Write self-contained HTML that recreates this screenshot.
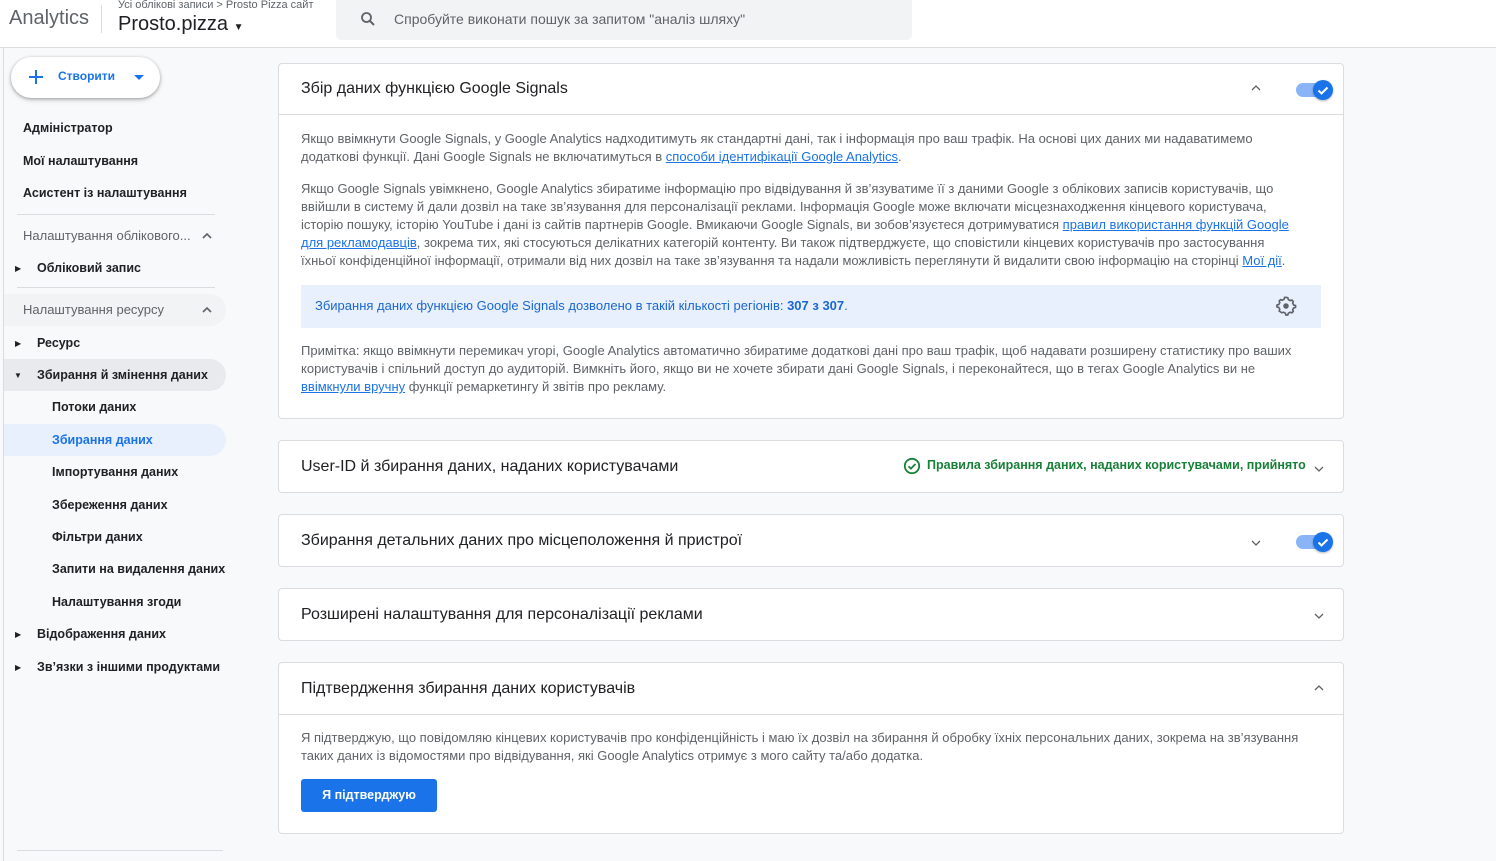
<!DOCTYPE html>
<html><head><meta charset="utf-8"><style>
*{box-sizing:border-box;margin:0;padding:0}
body{width:1496px;height:861px;overflow:hidden;background:#f8f9fa;font-family:"Liberation Sans",Arial,sans-serif;color:#202124;position:relative}
.hdr{position:absolute;left:0;top:0;width:1496px;height:48px;background:#fff;border-bottom:1px solid #dadce0}
.logo{position:absolute;left:9px;top:7px;font-size:20px;color:#5f6368}
.vsep{position:absolute;left:101px;top:5px;width:1px;height:28px;background:#dadce0}
.crumb{position:absolute;left:118px;top:-1px;font-size:11px;color:#5f6368}
.prop{position:absolute;left:118px;top:13px;font-size:20px;color:#202124}
.search{position:absolute;left:336px;top:0;width:576px;height:40px;background:#f1f3f4;border-radius:0 0 6px 6px}
.search span{position:absolute;left:58px;top:11px;font-size:14px;color:#5f6368}
.side{position:absolute;left:3px;top:48px;width:1px;height:813px;background:#dadce0}
.create{position:absolute;left:11px;top:57px;width:149px;height:41px;background:#fff;border-radius:21px;box-shadow:0 1px 3px rgba(0,0,0,.3),0 2px 6px rgba(0,0,0,.12)}
.create span{position:absolute;left:47px;top:12px;font-size:12px;color:#1a73e8;font-weight:bold}
.ni{position:absolute;font-size:12.5px;color:#202124;font-weight:bold;white-space:nowrap}
.gh{color:#5f6368;font-weight:normal;font-size:13px}
.pill{position:absolute;left:4px;width:222px;height:32px;border-radius:0 16px 16px 0}
.tri{position:absolute;font-size:8px;color:#202124}
.hl{position:absolute;left:17px;width:198px;height:1px;background:#dadce0}
.card{position:absolute;left:278px;width:1066px;background:#fff;border:1px solid #dadce0;border-radius:4px}
.ct{position:absolute;left:22px;font-size:16px;color:#202124}
.p{position:absolute;left:22px;width:1000px;font-size:13px;line-height:18px;color:#5f6368}
a{color:#1a73e8;text-decoration:underline}
.tog{position:absolute;width:34px;height:14px;border-radius:7px;background:#8ab4f8}
.tog i{position:absolute;right:-3px;top:-3px;width:20px;height:20px;border-radius:50%;background:#1a73e8;box-shadow:0 1px 2px rgba(0,0,0,.3)}
.cv{position:absolute}
</style></head><body>
<div class="hdr">
<div class="logo">Analytics</div><div class="vsep"></div>
<div class="crumb">Усі облікові записи &gt; Prosto Pizza сайт</div>
<div class="prop">Prosto.pizza <span style="font-size:10px">▼</span></div>
<div class="search"><svg style="position:absolute;left:23px;top:10px" width="18" height="18" viewBox="0 0 24 24"><circle cx="10" cy="10" r="6" fill="none" stroke="#5f6368" stroke-width="2.4"/><path d="M14.5 14.5L20 20" stroke="#5f6368" stroke-width="2.6"/></svg><span>Спробуйте виконати пошук за запитом "аналіз шляху"</span></div>
</div>
<div class="side"></div>
<div class="create"><svg style="position:absolute;left:17px;top:12px" width="16" height="16"><path d="M8 1v14M1 8h14" stroke="#1a73e8" stroke-width="2"/></svg><span>Створити</span><svg style="position:absolute;left:123px;top:18px" width="10" height="6"><path d="M0 0h10L5 5z" fill="#1a73e8"/></svg></div>
<div class="ni" style="left:23px;top:121px">Адміністратор</div>
<div class="ni" style="left:23px;top:154px">Мої налаштування</div>
<div class="ni" style="left:23px;top:186px">Асистент із налаштування</div>
<div class="hl" style="top:214px"></div>
<div class="ni gh" style="left:23px;top:228px">Налаштування облікового...</div>
<svg class="cv" style="left:202px;top:232px" width="10" height="7"><path d="M1 6l4-4 4 4" fill="none" stroke="#5f6368" stroke-width="1.6"/></svg>
<div class="tri" style="left:15px;top:264px">▶</div>
<div class="ni" style="left:37px;top:261px">Обліковий запис</div>
<div class="hl" style="top:287px"></div>
<div class="pill" style="top:294px;background:#f1f3f4"></div>
<div class="ni gh" style="left:23px;top:302px">Налаштування ресурсу</div>
<svg class="cv" style="left:202px;top:306px" width="10" height="7"><path d="M1 6l4-4 4 4" fill="none" stroke="#5f6368" stroke-width="1.6"/></svg>
<div class="tri" style="left:15px;top:339px">▶</div>
<div class="ni" style="left:37px;top:336px">Ресурс</div>
<div class="pill" style="top:359px;background:#e8eaed"></div>
<div class="tri" style="left:14px;top:371px">▼</div>
<div class="ni" style="left:37px;top:368px">Збирання й змінення даних</div>
<div class="ni" style="left:52px;top:400px">Потоки даних</div>
<div class="pill" style="top:424px;background:#e8f0fe"></div>
<div class="ni" style="left:52px;top:433px;color:#1a73e8">Збирання даних</div>
<div class="ni" style="left:52px;top:465px">Імпортування даних</div>
<div class="ni" style="left:52px;top:498px">Збереження даних</div>
<div class="ni" style="left:52px;top:530px">Фільтри даних</div>
<div class="ni" style="left:52px;top:562px">Запити на видалення даних</div>
<div class="ni" style="left:52px;top:595px">Налаштування згоди</div>
<div class="tri" style="left:15px;top:630px">▶</div>
<div class="ni" style="left:37px;top:627px">Відображення даних</div>
<div class="tri" style="left:15px;top:663px">▶</div>
<div class="ni" style="left:37px;top:660px">Зв’язки з іншими продуктами</div>
<div class="hl" style="top:850px;width:206px"></div>

<div class="card" style="top:63px;height:356px">
<div class="ct" style="top:16px">Збір даних функцією Google Signals</div>
<svg class="cv" style="left:972px;top:21px" width="10" height="6"><path d="M1 5l4-4 4 4" fill="none" stroke="#5f6368" stroke-width="1.3"/></svg>
<div class="tog" style="left:1017px;top:19px"><i><svg width="20" height="20"><path d="M5.5 10.5l3 3 6-6" fill="none" stroke="#fff" stroke-width="2"/></svg></i></div>
<div style="position:absolute;left:0;top:50px;width:100%;height:1px;background:#dadce0"></div>
<div class="p" style="top:66px;width:980px">Якщо ввімкнути Google Signals, у Google Analytics надходитимуть як стандартні дані, так і інформація про ваш трафік. На основі цих даних ми надаватимемо додаткові функції. Дані Google Signals не включатимуться в <a>способи ідентифікації Google Analytics</a>.</div>
<div class="p" style="top:116px">Якщо Google Signals увімкнено, Google Analytics збиратиме інформацію про відвідування й зв’язуватиме її з даними Google з облікових записів користувачів, що ввійшли в систему й дали дозвіл на таке зв’язування для персоналізації реклами. Інформація Google може включати місцезнаходження кінцевого користувача, історію пошуку, історію YouTube і дані із сайтів партнерів Google. Вмикаючи Google Signals, ви зобов’язуєтеся дотримуватися <a>правил використання функцій Google для рекламодавців</a>, зокрема тих, які стосуються делікатних категорій контенту. Ви також підтверджуєте, що сповістили кінцевих користувачів про застосування їхньої конфіденційної інформації, отримали від них дозвіл на таке зв’язування та надали можливість переглянути й видалити свою інформацію на сторінці <a>Мої дії</a>.</div>
<div style="position:absolute;left:22px;top:221px;width:1020px;height:43px;background:#e8f0fe"><span style="position:absolute;left:14px;top:13px;font-size:13px;color:#1967d2">Збирання даних функцією Google Signals дозволено в такій кількості регіонів: <b>307 з 307</b>.</span>
<svg style="position:absolute;left:974px;top:10px" width="22" height="22" viewBox="0 0 24 24"><path d="M12 3l2 .5.6 2 1.9 1.1 2-.6 1.4 1.5-.6 2 1.1 1.9 2 .6v2l-2 .6-1.1 1.9.6 2-1.5 1.4-2-.6-1.9 1.1-.6 2h-2l-.6-2-1.9-1.1-2 .6L4.6 18l.6-2-1.1-1.9-2-.6v-2l2-.6 1.1-1.9-.6-2L6 5.6l2 .6 1.9-1.1.6-2z" fill="none" stroke="#5f6368" stroke-width="1.8" transform="translate(0 -.5)"/><circle cx="12" cy="12" r="3" fill="#5f6368"/></svg></div>
<div class="p" style="top:278px">Примітка: якщо ввімкнути перемикач угорі, Google Analytics автоматично збиратиме додаткові дані про ваш трафік, щоб надавати розширену статистику про ваших користувачів і спільний доступ до аудиторій. Вимкніть його, якщо ви не хочете збирати дані Google Signals, і переконайтеся, що в тегах Google Analytics ви не <a>ввімкнули вручну</a> функції ремаркетингу й звітів про рекламу.</div>
</div>

<div class="card" style="top:440px;height:53px">
<div class="ct" style="top:17px">User-ID й збирання даних, наданих користувачами</div>
<svg style="position:absolute;left:624px;top:16px" width="18" height="18" viewBox="0 0 18 18"><circle cx="9" cy="9" r="7.2" fill="none" stroke="#188038" stroke-width="1.8"/><path d="M5.5 9.2l2.4 2.4 4.6-4.6" fill="none" stroke="#188038" stroke-width="1.8"/></svg>
<span style="position:absolute;left:648px;top:17px;font-size:12.5px;color:#188038;font-weight:bold">Правила збирання даних, наданих користувачами, прийнято</span>
<svg class="cv" style="left:1035px;top:25px" width="10" height="6"><path d="M1 1l4 4 4-4" fill="none" stroke="#5f6368" stroke-width="1.3"/></svg>
</div>

<div class="card" style="top:514px;height:53px">
<div class="ct" style="top:17px">Збирання детальних даних про місцеположення й пристрої</div>
<svg class="cv" style="left:972px;top:25px" width="10" height="6"><path d="M1 1l4 4 4-4" fill="none" stroke="#5f6368" stroke-width="1.3"/></svg>
<div class="tog" style="left:1017px;top:20px"><i><svg width="20" height="20"><path d="M5.5 10.5l3 3 6-6" fill="none" stroke="#fff" stroke-width="2"/></svg></i></div>
</div>

<div class="card" style="top:588px;height:53px">
<div class="ct" style="top:17px">Розширені налаштування для персоналізації реклами</div>
<svg class="cv" style="left:1035px;top:24px" width="10" height="6"><path d="M1 1l4 4 4-4" fill="none" stroke="#5f6368" stroke-width="1.3"/></svg>
</div>

<div class="card" style="top:662px;height:172px">
<div class="ct" style="top:17px">Підтвердження збирання даних користувачів</div>
<svg class="cv" style="left:1035px;top:22px" width="10" height="6"><path d="M1 5l4-4 4 4" fill="none" stroke="#5f6368" stroke-width="1.3"/></svg>
<div style="position:absolute;left:0;top:51px;width:100%;height:1px;background:#dadce0"></div>
<div class="p" style="top:66px;width:1015px">Я підтверджую, що повідомляю кінцевих користувачів про конфіденційність і маю їх дозвіл на збирання й обробку їхніх персональних даних, зокрема на зв’язування таких даних із відомостями про відвідування, які Google Analytics отримує з мого сайту та/або додатка.</div>
<div style="position:absolute;left:22px;top:116px;width:136px;height:33px;background:#1a73e8;border-radius:3px;color:#fff;font-size:12.5px;font-weight:bold;text-align:center;line-height:33px">Я підтверджую</div>
</div>
</body></html>
